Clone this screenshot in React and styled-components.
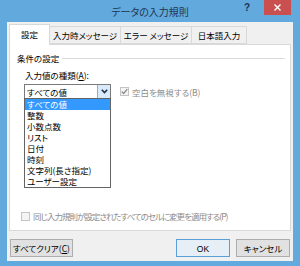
import React from "react"
import styled, { createGlobalStyle } from "styled-components"

const GlobalStyle = createGlobalStyle`
  html, body {
    margin: 0;
    padding: 0;
    width: 300px;
    height: 266px;
    overflow: hidden;
    background: #62a9de;
  }
  * {
    box-sizing: border-box;
  }
`

const Window = styled.div`
  width: 300px;
  height: 266px;
  display: flex;
  flex-direction: column;
  background: #62a9de;
  font-family: "Noto Sans CJK JP", "Liberation Sans", sans-serif;
  font-feature-settings: "palt";
  font-size: 8.5px;
  color: #000;
`

const TitleBar = styled.div`
  height: 22px;
  display: grid;
  grid-template-columns: 1fr auto 1fr;
  align-items: start;
`

const Title = styled.div`
  grid-column: 2;
  font-size: 10px;
  color: #1f3550;
  line-height: 22px;
  padding-top: 1px;
`

const Caption = styled.div`
  grid-column: 3;
  justify-self: end;
  display: flex;
  align-items: flex-start;
  margin-right: 9px;
`

const HelpButton = styled.div`
  width: 14px;
  height: 15px;
  margin-right: 10px;
  font-family: "Liberation Sans", sans-serif;
  font-weight: bold;
  font-size: 10px;
  line-height: 16px;
  text-align: center;
  color: #1c3350;
`

const CloseButton = styled.div`
  width: 27px;
  height: 15px;
  background: #c9504f;
  display: flex;
  align-items: center;
  justify-content: center;
`

const Client = styled.div`
  flex: 1;
  margin: 0 7px 5px;
  background: #f0f0f0;
  display: flex;
  flex-direction: column;
  padding: 2px 2px 4px;
`

const TabStrip = styled.div`
  height: 20px;
  display: flex;
  align-items: flex-end;
  position: relative;
  z-index: 1;
`

const Tab = styled.div`
  width: ${(p) => p.$w}px;
  height: ${(p) => (p.$active ? 21 : 18)}px;
  margin-bottom: ${(p) => (p.$active ? -1 : 0)}px;
  border: 1px solid #d9d9d9;
  border-bottom: ${(p) => (p.$active ? "none" : "1px solid #d9d9d9")};
  border-left-width: ${(p) => (p.$first || p.$active ? 1 : 0)}px;
  background: ${(p) => (p.$active ? "#fff" : "#f0f0f0")};
  line-height: ${(p) => (p.$active ? 19 : 16)}px;
  text-align: center;
  white-space: nowrap;
`

const Panel = styled.div`
  flex: 1;
  background: #fff;
  border: 1px solid #d9d9d9;
  display: flex;
  flex-direction: column;
  padding: 7px 5px 8px 7px;
`

const GroupHeading = styled.div`
  display: flex;
  align-items: center;
  height: 12px;
  gap: 3px;
`

const Rule = styled.div`
  flex: 1;
  height: 1px;
  background: #dcdcdc;
`

const Indent = styled.div`
  margin-left: 7px;
  display: flex;
  flex-direction: column;
`

const FieldLabel = styled.div`
  margin-top: 5px;
  padding-left: 1px;
  height: 12px;
  line-height: 12px;
`

const ComboRow = styled.div`
  margin-top: 3px;
  display: flex;
  align-items: center;
  gap: 9px;
`

const Combo = styled.div`
  position: relative;
  width: 87px;
  height: 15px;
  border: 1px solid #7a7a7a;
  background: #fff;
  display: flex;
  align-items: center;
  justify-content: space-between;
  padding: 0 0 0 2px;
`

const ComboArrow = styled.div`
  width: 13px;
  height: 13px;
  background: #d9ebfb;
  border-left: 1px solid #7eb4ea;
  display: flex;
  align-items: center;
  justify-content: center;
`

const DropList = styled.ul`
  position: absolute;
  top: 100%;
  left: -1px;
  width: 87px;
  margin: 0;
  padding: 0;
  list-style: none;
  background: #fff;
  border: 1px solid #646464;
`

const DropItem = styled.li`
  height: 11px;
  line-height: 11px;
  padding-left: 2px;
  background: ${(p) => (p.$selected ? "#3399ff" : "transparent")};
  color: ${(p) => (p.$selected ? "#fff" : "#000")};
  white-space: nowrap;
`

const CheckRow = styled.div`
  display: flex;
  align-items: center;
  gap: 3px;
  color: #8b8b8b;
  white-space: nowrap;
`

const Box = styled.div`
  width: 9px;
  height: 9px;
  border: 1px solid #c4c4c4;
  background: #f4f4f4;
  display: flex;
  align-items: center;
  justify-content: center;
`

const BottomCheck = styled(CheckRow)`
  margin-top: auto;
  margin-left: 4px;
  letter-spacing: -1px;
`

const ButtonRow = styled.div`
  margin-top: 8px;
  height: 18px;
  display: flex;
  gap: 6px;
  padding: 0 1px;
`

const Spacer = styled.div`
  flex: 1;
`

const Button = styled.div`
  width: ${(p) => p.$w}px;
  height: 18px;
  border: 1px solid ${(p) => (p.$default ? "#5b9fd8" : "#adadad")};
  background: ${(p) => (p.$default ? "#e6eef6" : "#e1e1e1")};
  line-height: 16px;
  text-align: center;
  white-space: nowrap;
`

const Latin = styled.span`
  font-family: "Liberation Sans", sans-serif;
`

const items = [
  "すべての値",
  "整数",
  "小数点数",
  "リスト",
  "日付",
  "時刻",
  "文字列(長さ指定)",
  "ユーザー設定",
]

const tabs = [
  { label: "設定", w: 41 },
  { label: "入力時メッセージ", w: 71 },
  { label: "エラー メッセージ", w: 71 },
  { label: "日本語入力", w: 55 },
]

export default function App() {
  return (
    <>
      <GlobalStyle />
      <Window>
        <TitleBar>
          <Title>データの入力規則</Title>
          <Caption>
            <HelpButton>?</HelpButton>
            <CloseButton>
              <svg width="7" height="7" viewBox="0 0 7 7">
                <path d="M0.5 0.5 L6.5 6.5 M6.5 0.5 L0.5 6.5" stroke="#fff" strokeWidth="1.4" />
              </svg>
            </CloseButton>
          </Caption>
        </TitleBar>
        <Client>
          <TabStrip>
            {tabs.map((t, i) => (
              <Tab key={t.label} $w={t.w} $active={i === 0} $first={i === 0}>
                {t.label}
              </Tab>
            ))}
          </TabStrip>
          <Panel>
            <GroupHeading>
              <span>条件の設定</span>
              <Rule />
            </GroupHeading>
            <Indent>
              <FieldLabel>
                入力値の種類(<u>A</u>):
              </FieldLabel>
              <ComboRow>
                <Combo>
                  <span>すべての値</span>
                  <ComboArrow>
                    <svg width="7" height="5" viewBox="0 0 7 5">
                      <path d="M0.8 0.8 L3.5 3.6 L6.2 0.8" stroke="#1d2f4a" strokeWidth="1.6" fill="none" />
                    </svg>
                  </ComboArrow>
                  <DropList>
                    {items.map((it, i) => (
                      <DropItem key={it} $selected={i === 0}>
                        {it}
                      </DropItem>
                    ))}
                  </DropList>
                </Combo>
                <CheckRow>
                  <Box>
                    <svg width="7" height="7" viewBox="0 0 7 7">
                      <path d="M0.8 3.6 L2.7 5.5 L6.2 1.2" stroke="#8a8a8a" strokeWidth="1.3" fill="none" />
                    </svg>
                  </Box>
                  空白を無視する(B)
                </CheckRow>
              </ComboRow>
            </Indent>
            <BottomCheck>
              <Box />
              <span>同じ入力規則が設定されたすべてのセルに変更を適用する(P)</span>
            </BottomCheck>
          </Panel>
          <ButtonRow>
            <Button $w={63}>
              すべてクリア(<u>C</u>)
            </Button>
            <Spacer />
            <Button $w={54} $default>
              <Latin>OK</Latin>
            </Button>
            <Button $w={54}>キャンセル</Button>
          </ButtonRow>
        </Client>
      </Window>
    </>
  )
}
